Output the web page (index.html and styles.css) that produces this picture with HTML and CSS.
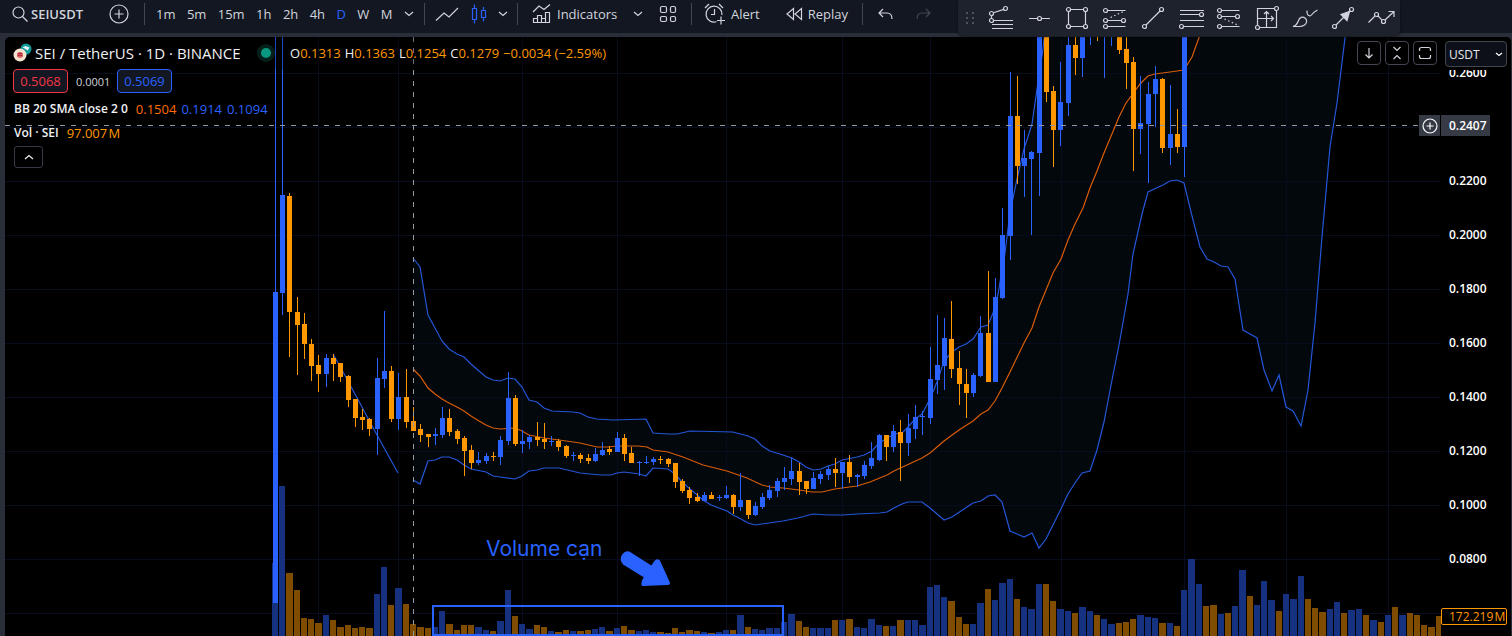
FILE: index.html
```html
<!DOCTYPE html>
<html lang="en">
<head>
<meta charset="utf-8">
<title>SEIUSDT 1D</title>
<link rel="stylesheet" href="styles.css">
</head>
<body>
<header class="topbar">
  <div class="group group-symbol">
    <button class="tool symbol"><svg class="icon" width="16" height="16" viewBox="0 0 16 16"><circle cx="6.5" cy="6.5" r="5.5"/><path d="M10.5 10.5l5 5"/></svg><b>SEIUSDT</b></button>
    <button class="tool" aria-label="Compare"><svg class="icon" width="20" height="20" viewBox="0 0 20 20"><circle cx="10" cy="10" r="9"/><path d="M10 5.5v9M5.5 10h9"/></svg></button>
  </div>
  <nav class="group group-interval">
    <button class="tool">1m</button><button class="tool">5m</button><button class="tool">15m</button><button class="tool">1h</button><button class="tool">2h</button><button class="tool">4h</button><button class="tool active">D</button><button class="tool">W</button><button class="tool">M</button>
    <button class="tool" aria-label="More intervals"><svg class="icon" width="10" height="6" viewBox="0 0 10 6"><path d="M1 1l4 3.500 4-3.500"/></svg></button>
  </nav>
  <div class="group group-style">
    <button class="tool" aria-label="Line"><svg class="icon" width="24" height="16" viewBox="0 0 24 16"><path d="M1 14.500l8-7.500 5 4L23 2"/></svg></button>
    <button class="tool active" aria-label="Candles"><svg class="icon" width="16" height="20" viewBox="0 0 16 20"><path d="M1.500 4.500h4v11h-4zM3.500 0.500v4M3.500 15.500v4M10.500 6.500h4v7h-4zM12.500 3v3.500M12.500 13.500v4"/></svg></button>
    <button class="tool" aria-label="Chart types"><svg class="icon" width="10" height="6" viewBox="0 0 10 6"><path d="M1 1l4 3.500 4-3.500"/></svg></button>
  </div>
  <div class="group group-indicators">
    <button class="tool"><svg class="icon" width="20" height="20" viewBox="0 0 20 20"><path d="M1.500 18.500v-4h4v4zM5.500 18.500v-7h4v3M9.500 18.500v-4h4v4zM13.500 18.500v-10h4v10zM1 18.500h17M1 8l6-6 5 3.500 6-5"/></svg>Indicators</button>
    <button class="tool" aria-label="Favorites"><svg class="icon" width="10" height="6" viewBox="0 0 10 6"><path d="M1 1l4 3.500 4-3.500"/></svg></button>
    <button class="tool" aria-label="Templates"><svg class="icon" width="18" height="18" viewBox="0 0 18 18"><rect x="1.500" y="1.500" width="6" height="6" rx="1.500"/><rect x="11.500" y="1.500" width="5" height="6" rx="1.500"/><rect x="1.500" y="11.500" width="6" height="5" rx="1.500"/><rect x="11.500" y="11.500" width="5" height="5" rx="1.500"/></svg></button>
  </div>
  <div class="group group-alert">
    <button class="tool"><svg class="icon" width="22" height="22" viewBox="0 0 22 22"><path d="M12.500 18.800A8 8 0 1 1 18 12M10.500 6v5.500H7M1 5l4-4M15 1l4 4M17 13.500v8M13 17.500h8"/></svg>Alert</button>
    <button class="tool"><svg class="icon" width="17" height="14" viewBox="0 0 17 14"><path d="M7.500 1.500v11L1 7zM15.500 1.500v11L9 7z"/></svg>Replay</button>
  </div>
  <div class="group group-history">
    <button class="tool" aria-label="Undo"><svg class="icon" width="15" height="12" viewBox="0 0 15 12"><path d="M5 1L1 5l4 4M1 5h8q5 0 5 6"/></svg></button>
    <button class="tool dim" aria-label="Redo"><svg class="icon" width="15" height="12" viewBox="0 0 15 12"><path d="M10 1l4 4-4 4M14 5H6Q1 5 1 11"/></svg></button>
  </div>
</header>

<div class="drawbar">
  <svg class="grip" width="10" height="16" viewBox="0 0 10 16"><g fill="#50535e"><path d="M1 2h2v2H1zM7 2h2v2H7zM1 7h2v2H1zM7 7h2v2H7zM1 12h2v2H1zM7 12h2v2H7z"/></g></svg>
  <button class="draw" aria-label="Trend based fib"><svg class="icon" width="28" height="28" viewBox="0 0 28 28"><path d="M6.400 8.800l10.400-3.400M4.500 11.500v3M6.500 16.500H26M5 20.500h21M5 24.500h21"/><circle cx="4.500" cy="9.500" r="2"/><circle cx="18.500" cy="4.500" r="2"/><circle cx="4.500" cy="16.500" r="2"/></svg></button>
  <button class="draw" aria-label="Horizontal line"><svg class="icon" width="28" height="28" viewBox="0 0 28 28"><path d="M4 14.500h8.500M16.500 14.500H25"/><circle cx="14.500" cy="14.500" r="2"/></svg></button>
  <button class="draw" aria-label="Rectangle"><svg class="icon" width="28" height="28" viewBox="0 0 28 28"><path d="M7.500 5.500h13M7.500 22.500h13M5.500 7.500v13M22.500 7.500v13"/><circle cx="5.500" cy="5.500" r="2"/><circle cx="22.500" cy="5.500" r="2"/><circle cx="5.500" cy="22.500" r="2"/><circle cx="22.500" cy="22.500" r="2"/></svg></button>
  <button class="draw" aria-label="Long position"><svg class="icon" width="28" height="28" viewBox="0 0 28 28"><path d="M6.500 6.500h18M6.500 16.500h14M6.500 22.500h18"/><path stroke-dasharray="1.500 2.500" d="M9.500 13.500l13-6"/><circle cx="4.500" cy="6.500" r="2"/><circle cx="4.500" cy="16.500" r="2"/><circle cx="22.500" cy="16.500" r="2"/><circle cx="4.500" cy="22.500" r="2"/></svg></button>
  <button class="draw" aria-label="Trend line"><svg class="icon" width="28" height="28" viewBox="0 0 28 28"><path d="M7 21L21 7"/><circle cx="5.500" cy="22.500" r="2"/><circle cx="22.500" cy="5.500" r="2"/></svg></button>
  <button class="draw" aria-label="Fib retracement"><svg class="icon" width="28" height="28" viewBox="0 0 28 28"><path d="M3 6.500h24M3 10.500h19.500M3 16.500h24M6.500 22.500H27"/><circle cx="24.500" cy="10.500" r="2"/><circle cx="4.500" cy="22.500" r="2"/></svg></button>
  <button class="draw" aria-label="Short position"><svg class="icon" width="28" height="28" viewBox="0 0 28 28"><path d="M6.500 6.500h18M6.500 12.500h14M6.500 22.500h18"/><path stroke-dasharray="1.500 2.500" d="M9.500 15l13 6"/><circle cx="4.500" cy="6.500" r="2"/><circle cx="4.500" cy="12.500" r="2"/><circle cx="22.500" cy="12.500" r="2"/><circle cx="4.500" cy="22.500" r="2"/></svg></button>
  <button class="draw" aria-label="Date and price range"><svg class="icon" width="28" height="28" viewBox="0 0 28 28"><path d="M21.500 4.500h-17v17M6.500 23.500h17v-17M13.500 23V7.500M11 10l2.500-2.500L16 10M5 14.500h15.500M18 12l2.500 2.500L18 17"/><circle cx="23.500" cy="4.500" r="2"/><circle cx="4.500" cy="23.500" r="2"/></svg></button>
  <button class="draw" aria-label="Brush"><svg class="icon" width="28" height="28" viewBox="0 0 28 28"><path d="M2 22.500c4-1 4.500-3.500 5.500-6 1-3 4-4.500 6.500-2.500 2.500 2 2 5-.5 7-1.500 1-3 1.500-5 1.500zM16 6.500c-.5 4 1.500 6 4 5M26.500 6c-2 1-5 3.500-6.500 5.500"/></svg></button>
  <button class="draw" aria-label="Arrow"><svg class="icon" width="28" height="28" viewBox="0 0 28 28"><path d="M7 21L21 7"/><path fill="#d1d4dc" d="M20.500 7.500l-2.500 9-6-6z"/><circle cx="5.500" cy="22.500" r="2"/><circle cx="22.500" cy="5.500" r="2"/></svg></button>
  <button class="draw" aria-label="Path"><svg class="icon" width="28" height="28" viewBox="0 0 28 28"><path d="M1.500 18.500L8 12M11 12l4.200 4.200M18 16l9-8.500M21.500 7.500H27V13"/><circle cx="9.500" cy="10.500" r="2"/><circle cx="16.500" cy="17.500" r="2"/></svg></button>
</div>

<main class="chart">
  <section class="plot">
    <svg id="canvas" class="canvas" role="img" aria-label="SEI / TetherUS daily candles"></svg>
    <div class="legend">
      <div class="title-row">
        <h1 class="title">
          <svg width="20" height="20" viewBox="0 0 20 20"><circle cx="13" cy="6" r="5.500" fill="#129a9a"/><path d="M9.500 4.500l3-1.500 4 1.500-2 3-2-1.500z" fill="#e8f6f4"/><circle cx="7" cy="12" r="6.500" fill="#f6e3cf"/><circle cx="7" cy="12" r="3" fill="#e0696c"/><path d="M4.500 11q2.500-2 5 0M4.500 13q2.500-2 5 0" stroke="#9c1f2e" fill="none"/></svg>
          <span>SEI / TetherUS · 1D · BINANCE</span>
        </h1>
        <span class="status"></span>
        <div class="ohlc"><span>O<i>0.1313</i></span><span>H<i>0.1363</i></span><span>L<i>0.1254</i></span><span>C<i>0.1279</i></span><i>−0.0034 (−2.59%)</i></div>
      </div>
      <div class="quote-row"><button class="quote sell">0.5068</button><span class="spread">0.0001</span><button class="quote buy">0.5069</button></div>
      <div class="study"><b>BB 20 SMA close 2 0</b><span class="basis">0.1504</span><span class="band">0.1914</span><span class="band">0.1094</span></div>
      <div class="study"><b>Vol · SEI</b><span class="volume">97.007&#8202;M</span></div>
      <button class="collapse" aria-label="Hide legend"><svg class="icon" width="10" height="6" viewBox="0 0 10 6"><path d="M1 5l4-3.500L9 5"/></svg></button>
    </div>
    <div class="pane-controls">
      <button class="pane-button" aria-label="Move pane down"><svg class="icon" width="16" height="16" viewBox="0 0 16 16"><path d="M8 3v10M4.500 9.500L8 13l3.500-3.500"/></svg></button>
      <button class="pane-button" aria-label="Collapse pane"><svg class="icon" width="16" height="16" viewBox="0 0 16 16"><path d="M4.500 2L8 5.500 11.500 2M4.500 14L8 10.500l3.500 3.500"/></svg></button>
      <button class="pane-button" aria-label="Maximize pane"><svg class="icon" width="16" height="16" viewBox="0 0 16 16"><path d="M2.500 6V4.500q0-2 2-2h7q2 0 2 2V6M2.500 10v1.500q0 2 2 2h7q2 0 2-2V10"/></svg></button>
    </div>
    <button class="cross-add" aria-label="Add alert at price"><svg class="icon" width="18" height="18" viewBox="0 0 18 18"><circle cx="9" cy="9" r="7"/><path d="M9 5.500v7M5.500 9h7"/></svg></button>
  </section>
  <aside class="axis">
    <span class="tick">0.2600</span><span class="tick"></span><span class="tick">0.2200</span><span class="tick">0.2000</span><span class="tick">0.1800</span><span class="tick">0.1600</span><span class="tick">0.1400</span><span class="tick">0.1200</span><span class="tick">0.1000</span><span class="tick">0.0800</span>
    <div class="currency"><select aria-label="Currency"><option>USDT</option></select><svg class="icon caret" width="8" height="5" viewBox="0 0 8 5"><path d="M1 1l3 2.500L7 1"/></svg></div>
    <span class="cross-price">0.2407</span>
    <span class="volume-price">172.219&#8202;M</span>
  </aside>
</main>
<script src="chart.js"></script>
</body>
</html>
```
FILE: styles.css
```css
* { box-sizing: border-box; }
body {
  margin: 0;
  height: 100vh;
  display: flex;
  flex-direction: column;
  overflow: hidden;
  background: #2a2e39;
  color: #d1d4dc;
  font-family: "Open Sans", "Noto Sans", sans-serif;
  font-size: 13px;
}
button, select { font: inherit; color: inherit; }
button { background: none; border: 0; padding: 0; cursor: pointer; }
.icon { display: block; flex: none; fill: none; stroke: currentColor; stroke-width: 1.2; }

.topbar { display: flex; height: 33px; flex: none; background: #131722; padding-top: 3px; }
.group { display: flex; align-items: center; height: 22px; border-right: 1px solid #434651; flex: none; }
.group-symbol { width: 145px; padding-left: 12px; justify-content: space-between; padding-right: 15px; }
.group-interval { width: 280px; padding: 0 10px 0 11px; justify-content: space-between; }
.group-style { width: 93px; padding: 0 9px 0 10px; justify-content: space-between; }
.group-indicators { width: 174px; padding: 0 14px; justify-content: space-between; }
.group-alert { width: 171px; padding: 0 14px 0 12px; justify-content: space-between; }
.group-history { width: 85px; padding: 0 17px 0 15px; justify-content: space-between; border-right: 0; }
.tool { display: flex; align-items: center; gap: 5px; height: 22px; line-height: 22px; font-weight: 500; }
.symbol { gap: 3px; }
.symbol b { font-weight: 600; }
.tool.active { color: #2962ff; }
.tool.dim { color: #434651; }

.drawbar {
  position: absolute;
  z-index: 3;
  top: 0;
  right: 112px;
  height: 36px;
  display: flex;
  align-items: center;
  gap: 10px;
  padding: 0 5px 0 7px;
  background: #1e222d;
  border-radius: 0 0 6px 6px;
  box-shadow: 0 1px 3px #0008;
}
.grip { margin-right: 2px; }
.draw { width: 28px; height: 28px; }

.chart { flex: 1; min-height: 0; display: flex; margin: 4px 1px 0 5px; background: #000; border-radius: 5px 5px 0 0; overflow: hidden; }
.plot { position: relative; flex: 1; min-width: 0; }
.canvas { position: absolute; inset: 0; width: 100%; height: 100%; }
.grid { stroke: #070d1e; }
.candle { fill: #ff9800; }
.candle.up { fill: #2962ff; }
.vol { fill: #804d00; }
.vol.up { fill: #153180; }
.fill { fill: #02080c; }
.line { fill: none; stroke: #2456d8; stroke-width: 1.2; }
.line.mid { stroke: #da5c08; }
.cross { stroke: #9598a1; stroke-dasharray: 5 6; }
.note-box { fill: none; stroke: #2962ff; stroke-width: 2; }
.note-arrow { fill: #2962ff; stroke: #2962ff; stroke-width: 2; stroke-linejoin: round; }
.note-text { fill: #2962ff; font: 21px Inter, sans-serif; }

.legend { position: relative; padding-left: 8px; color: #f0f1f4; display: flex; flex-direction: column; align-items: flex-start; }
.title-row { display: flex; align-items: center; height: 32px; background: #0004; }
.title { display: flex; align-items: center; gap: 2px; margin: 0; font-size: 15px; font-weight: 500; width: 244px; white-space: nowrap; }
.title svg { flex: none; }
.status { width: 18px; height: 18px; border-radius: 9px; border: 4px solid #04201b; background: #089981; }
.ohlc { display: flex; gap: 4px; margin-left: 15px; font-weight: 500; }
.ohlc i { font-style: normal; font-weight: 400; color: #ff9800; }
.quote-row { display: flex; align-items: center; gap: 8px; height: 24px; }
.quote { width: 55px; height: 24px; border: 1px solid; border-radius: 4px; background: #131722; }
.sell { color: #f23645; }
.buy { color: #2962ff; }
.spread { font-size: 11px; width: 33px; color: #d1d4dc; }
.study { display: flex; gap: 5px; height: 24px; line-height: 24px; padding-left: 1px; }
.quote-row + .study { margin-top: 4px; }
.study b { margin-right: 3px; font-size: 12px; font-weight: 600; }
.basis { color: #ff6d00; }
.band { color: #2962ff; }
.volume { color: #ff9800; }
.collapse { width: 29px; height: 22px; margin: 1px 0 0 1px; border: 1px solid #363a45; border-radius: 3px; display: grid; place-items: center; }
.pane-controls { position: absolute; top: 4px; right: 4px; display: flex; gap: 4px; }
.pane-button { width: 24px; height: 24px; border: 1px solid #434651; border-radius: 4px; background: #000; display: grid; place-items: center; }
.cross-add { position: absolute; right: 1px; top: 78px; width: 21px; height: 21px; background: #363a45; color: #fff; display: grid; place-items: center; }

.axis { position: relative; width: 70px; flex: none; padding-top: 9px; color: #fff; font-size: 12px; font-weight: 600; background: #000; }
.tick { display: block; height: 54px; line-height: 54px; padding-left: 8px; }
.currency { position: absolute; top: 0; left: 0; right: 0; padding: 4px 4px 3px; background: #000; }
.currency select { display: block; width: 62px; height: 26px; appearance: none; background: #0d1019; border: 1px solid #434651; border-radius: 4px; padding: 0 3px; font-weight: 400; color: #e6e8ee; }
.caret { position: absolute; right: 8px; top: 15px; }
.cross-price { position: absolute; top: 78px; left: 0; width: 49px; height: 21px; line-height: 21px; padding-left: 8px; background: #363a45; }
.volume-price { position: absolute; top: 571px; left: 0; width: 66px; height: 17px; line-height: 15px; padding-left: 7px; border: 1px solid #ff9800; border-radius: 2px; background: #000; color: #ff9800; font-weight: 400; }
```
FILE: chart.js
```js
// Each candle: direction, high, body top, body bottom, low (y in window space).
const candles = `b 30 292 603 603,b 30 195 293 315,o 193 196 312 357,o 297 312 325 375,o 313 324 344 359,o 339 344 366 381,o 355 365 374 392,b 354 358 374 387,o 354 358 364 381,o 363 363 377 382,o 375 376 400 407,o 399 399 418 427,o 409 417 420 430,o 418 419 429 436,b 358 378 429 455,b 311 371 379 388,o 366 371 419 422,b 373 397 419 430,o 369 397 422 428,o 407 421 431 431,o 424 429 435 442,o 434 434 437 447,b 428 434 436 445,b 407 418 435 438,o 409 418 432 436,o 429 431 439 444,o 436 438 451 476,o 445 450 463 469,b 452 460 463 465,b 453 456 461 464,o 452 456 457 461,b 436 440 457 465,b 372 398 441 445,o 395 398 444 446,b 430 441 444 453,b 435 437 442 449,o 422 437 440 446,o 423 439 442 449,b 436 441 442 446,o 439 441 447 451,o 445 446 456 458,b 452 455 456 461,o 453 455 459 463,o 454 458 461 464,b 448 454 461 462,b 442 450 455 456,o 446 449 452 455,b 432 438 452 452,o 434 438 454 461,o 447 453 463 463,b 461 462 463 476,b 456 462 463 464,b 457 459 462 465,o 456 459 460 464,o 458 459 464 467,o 463 463 482 488,o 479 481 491 493,o 487 490 498 504,o 493 497 501 502,b 492 495 501 501,o 492 495 499 499,b 495 497 498 501,b 486 495 498 499,o 494 495 507 514,b 473 500 507 511,o 500 500 515 519,b 502 506 515 516,b 493 497 507 509,b 485 490 498 500,b 478 481 491 497,b 467 478 482 490,b 458 471 479 485,o 463 471 482 495,o 481 481 489 494,b 472 478 489 489,b 471 474 479 484,b 466 469 475 480,o 458 469 473 487,b 462 462 473 489,o 455 462 477 483,b 474 475 477 487,b 461 465 476 479,b 442 458 466 469,b 434 435 460 461,o 435 435 447 461,b 425 431 447 452,o 420 432 443 481,b 414 428 443 456,b 405 417 429 439,b 411 416 417 435,b 347 379 418 424,b 315 365 380 394,b 318 338 366 390,o 301 339 369 378,o 351 368 384 405,o 369 384 393 418,b 373 375 393 397,b 316 333 376 377,o 271 333 382 382,b 278 297 382 382,b 208 235 298 299,b 72 116 236 260,o 76 116 166 184,b 130 158 166 197,b 151 152 159 235,b 30 30 153 196,o 30 30 92 102,o 86 91 130 167,b 62 102 130 146,b 30 45 103 116,o 30 45 58 75,b 30 30 58 77,b 30 30 31 45,o 30 30 31 41,b 30 30 31 78,b 30 30 31 46,o 30 30 50 54,o 30 49 63 89,o 57 62 129 171,b 76 123 129 154,b 82 94 124 183,b 66 79 94 127,o 78 79 148 153,b 85 134 148 165,o 109 134 147 153,b 30 30 147 177`;
const volumes = `b563 b486 o573 o590 o618 o619 o623 b615 o620 o627 o625 o628 o627 o628 b594 b567 o605 b588 o604 o624 o627 o628 b627 b611 o624 o630 o625 o625 b627 b630 o631 b621 b590 o616 b624 b629 o625 o627 b631 o632 o630 b631 o631 o630 b629 b627 o631 b628 o626 o630 b631 b630 b632 o632 o633 o628 o632 o630 o631 b632 o633 b632 b630 o630 b615 o627 b629 b630 b628 b628 b622 b614 o621 o627 b628 b628 b628 o620 b620 o619 b627 b628 b619 b625 o626 b626 o620 b620 b620 b625 b587 b585 b597 o601 o617 o624 b624 b603 o589 b600 b583 b579 o599 b607 b609 b584 o584 o601 b609 b611 o613 b607 b611 o615 b619 b624 o623 o622 o619 b615 b617 b618 o623 b623 o626 b590 b559 b584 o606 o605 b614 o613 b606 b570 o596 b605 b581 b600 o611 b594 b599 b576 o599 o608 o612 b609 b602 o613 b610 b609 o615 b620 o622 b615 o607 b615 o613 o615 o625 o627 o616`;
const early = '333,354 342,370 362,407 377,435 398,473';
const upper = '413,258 420,267 428,315 435,328 442,341 449,349 457,354 464,357 471,364 479,371 486,377 493,380 500,381 508,378 515,379 522,387 529,400 537,402 544,408 552,411 573,412 580,413 588,417 597,419 613,420 646,419 653,433 668,434 677,434 690,431 733,432 748,436 755,439 762,446 770,451 783,455 792,458 799,462 806,467 813,470 821,469 828,466 835,464 842,460 857,457 864,455 872,451 878,444 887,438 895,434 902,433 908,427 915,419 922,414 930,399 937,382 944,361 952,352 959,347 966,344 973,339 981,327 988,325 993,313 998,294 1005,253 1010,213 1017,179 1024,149 1032,124 1037,89 1043,49 1045,30';
const basis = '413,369 420,376 428,388 435,394 442,399 449,403 457,407 464,411 471,416 479,421 486,425 493,428 500,429 515,428 522,431 529,435 544,438 559,440 580,443 597,447 608,447 617,446 638,446 647,447 653,450 668,452 683,457 703,465 727,471 747,478 762,485 770,487 783,488 799,490 812,492 822,492 835,489 842,488 857,486 870,482 887,475 894,471 922,458 930,453 937,447 944,441 959,430 973,421 981,414 988,410 995,401 1002,388 1010,372 1024,343 1032,328 1039,307 1053,273 1061,259 1068,240 1075,224 1083,208 1090,188 1097,171 1104,153 1119,117 1126,103 1132,95 1140,84 1148,76 1155,74 1170,72 1184,70 1192,57 1201,32';
const lower = '413,480 420,484 428,461 435,460 442,457 449,457 457,460 464,465 471,469 486,472 493,476 500,477 515,479 522,476 529,471 537,470 544,468 559,468 580,473 600,475 611,475 617,473 624,472 639,474 646,476 653,468 668,469 675,474 682,482 690,489 703,500 711,505 727,511 733,515 741,519 748,523 755,525 762,524 783,521 798,518 813,514 828,515 843,515 857,514 880,513 887,512 894,508 902,504 908,502 922,502 930,508 937,514 944,520 952,517 973,503 981,501 988,496 995,495 1002,502 1010,531 1017,534 1024,537 1032,533 1039,548 1046,539 1054,523 1061,509 1068,494 1075,483 1082,473 1090,471 1097,450 1104,422 1112,380 1119,345 1128,294 1133,254 1142,214 1148,192 1163,185 1170,181 1177,180 1184,183 1192,216 1200,247 1207,259 1214,262 1221,266 1228,267 1235,279 1243,330 1250,334 1257,338 1264,370 1272,391 1279,375 1286,407 1293,411 1301,426 1308,390 1315,323 1322,237 1330,147 1337,103 1346,30';

const step = 7.275;
const x = i => Math.floor(275.25 + step * i);
const rect = (cls, left, top, w, h) => `<rect class="${cls}" x="${left}" y="${top}" width="${w}" height="${h}"/>`;
const poly = (cls, pts) => `<polyline class="${cls}" points="${pts}"/>`;

let out = `<polygon class="fill" points="${upper} 1346,30 ${lower.split(' ').reverse().join(' ')}"/>`;
for (const y of [73, 127, 181, 235, 289, 343, 397, 451, 505, 559, 613]) out += `<path class="grid" d="M5 ${y}.5H1600"/>`;
for (const v of [318, 398, 522, 617, 726, 842, 930, 1061, 1184, 1286, 1388]) out += `<path class="grid" d="M${v}.5 37V1200"/>`;
volumes.split(' ').forEach((v, i) => {
  const top = +v.slice(1);
  out += rect(v[0] === 'b' ? 'vol up' : 'vol', x(i) - 3, top, x(i + 1) - x(i) - 1, 636 - top);
});
out += poly('line', early) + poly('line', upper) + poly('line', lower) + poly('line mid', basis);
candles.split(',').forEach((row, i) => {
  const [dir, high, top, bottom, low] = row.split(' ');
  const cls = dir === 'b' ? 'candle up' : 'candle';
  out += rect(cls, x(i), high, 1, low - high) + rect(cls, x(i) - 2, top, 5, bottom - top);
});
out += '<path class="cross" d="M5 125.5H1600M413.5 37V1200"/>';
out += '<rect class="note-box" x="433" y="606" width="350" height="29"/>';
out += '<path class="note-arrow" d="M630 553L652 567Q656 558 659 561L669 583Q669 584 667 584L643 585Q641 584 645 577L624 564Q620 560 623 555 626 551 630 553Z"/>';
out += '<text class="note-text" x="486" y="556">Volume cạn</text>';
document.getElementById('canvas').innerHTML = `<g transform="translate(-5 -37)">${out}</g>`;
```
